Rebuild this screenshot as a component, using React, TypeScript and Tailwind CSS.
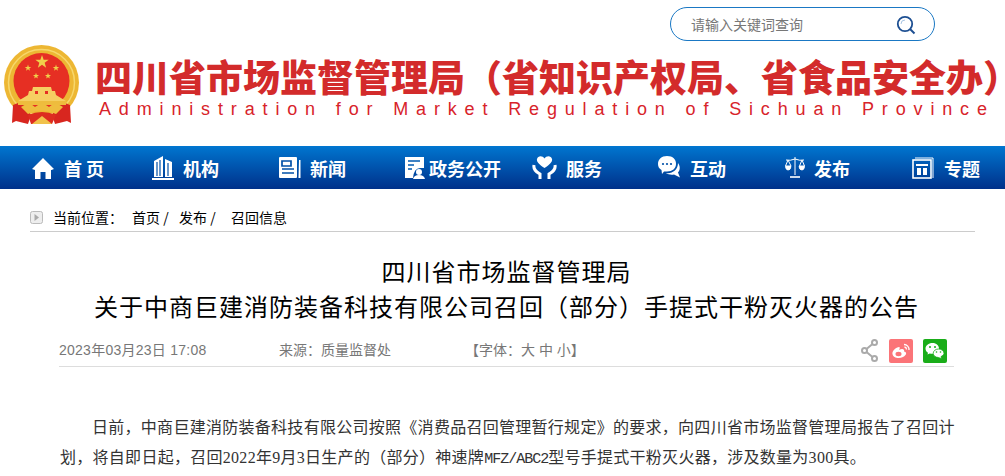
const sans = "font-['Liberation_Sans','Noto_Sans_CJK_SC',sans-serif]";

function Emblem() {
  const star = (cx: number, cy: number, r: number) => {
    const pts: string[] = [];
    for (let i = 0; i < 10; i++) {
      const a = -Math.PI / 2 + (i * Math.PI) / 5;
      const q = i % 2 === 0 ? r : r * 0.4;
      pts.push(`${cx + q * Math.cos(a)},${cy + q * Math.sin(a)}`);
    }
    return <polygon points={pts.join(" ")} fill="#f0cf4a" />;
  };
  return (
    <svg width="76" height="80" viewBox="0 0 76 80" className="shrink-0">
      <circle cx="37.5" cy="37.5" r="37.5" fill="#edb733" />
      <circle cx="37.5" cy="37.5" r="33" fill="none" stroke="#f7d76c" strokeWidth="1.5" />
      <path d="M9 60 L19 56 L27 70 L24 79 L12 76 L8 78 Z M66 60 L56 56 L48 70 L51 79 L63 76 L67 78 Z" fill="#d8261f" />
      <circle cx="37.5" cy="36" r="28" fill="#e62f23" />
      {star(38, 17, 7)}
      {star(24, 23, 3.4)}
      {star(52, 23, 3.4)}
      {star(32, 31, 3.2)}
      {star(44, 31, 3.2)}
      <path d="M29 42 H47 L48 46 H51 L52 50 L62 56 H14 L24 50 L25 46 H28 Z" fill="#f6cf62" />
      <rect x="31" y="46" width="3" height="3" fill="#e62f23" />
      <rect x="41" y="46" width="3" height="3" fill="#e62f23" />
      <rect x="14" y="56" width="48" height="4" fill="#eebc3d" />
      <path d="M17 62 Q25 56 31 62 Q38 56 45 62 Q51 56 59 62 L52 69 Q38 62 24 69 Z" fill="#efbd3e" />
      <path d="M24 70 Q38 64 52 70 L48 79 H27 Z" fill="#dd2c20" />
      <path d="M28 79 L38 71 L48 79 Z" fill="#f1c24b" />
    </svg>
  );
}

function Nav({ icon, label, w, gap = "gap-[9px]" }: { icon: React.ReactNode; label: string; w?: string; gap?: string }) {
  return (
    <div className={`flex items-center ${gap} ${w ?? ""}`}>
      <span className="flex items-center justify-center">{icon}</span>
      <span className="text-[18px] font-bold text-white leading-none whitespace-nowrap">{label}</span>
    </div>
  );
}

const IHome = <svg width="24" height="24" viewBox="0 0 24 24" fill="#fff"><path d="M12 2 L23 13 L20.5 14 L20 14 V23 H14.5 V16 H9.5 V23 H4 V14 L1 13 Z" /></svg>;
const IBuilding = <svg width="22" height="24" viewBox="0 0 22 24" fill="#fff"><path d="M2 5 L11 0 V21 H2 Z M13 3 L20 6 V21 H13 Z M0 22 H22 V24 H0 Z" /><path d="M5 6 V20 M8 4 V20 M16 7 V20" stroke="#0050a8" strokeWidth="1.2" /></svg>;
const INews = <svg width="22" height="22" viewBox="0 0 22 22"><rect x="0" y="0" width="18" height="21" rx="1" fill="#fff" /><path d="M20 3 H21.5 V21 H19.5 Z" fill="#fff" /><path d="M3 4 H12 V9 H3 Z M3 12 H15 M3 16 H15" fill="none" stroke="#0050a8" strokeWidth="1.7" /></svg>;
const IGov = <svg width="20" height="22" viewBox="0 0 20 22"><path d="M0 0 H19 V11 H15 Q9 11 8 21 H0 Z" fill="#fff" /><path d="M3 4 H15 M3 8 H9 M3 12 H7" stroke="#0059b0" strokeWidth="1.5" /><circle cx="14" cy="15" r="3" fill="#fff" /><path d="M8 22 Q9 18 14 18 Q19 18 20 22 Z" fill="#fff" /></svg>;
const IServe = <svg width="25" height="23" viewBox="0 0 25 23" fill="none"><path d="M12.5 12 C6 8 4.5 5 5 3 C6 -0.5 10.5 -0.5 12.5 2.5 C14.5 -0.5 19 -0.5 20 3 C20.5 5 19 8 12.5 12 Z" fill="#fff" /><path d="M2 9 C1 14 5 16 8 18 L8 23 M23 9 C24 14 20 16 17 18 L17 23" stroke="#fff" strokeWidth="3" /></svg>;
const IChat = <svg width="23" height="23" viewBox="0 0 23 23"><path d="M9 0 C15 0 18 3.5 18 8 C18 12.5 14.5 15.5 9 15.5 L6 15.5 L4 18 L3.5 14 C1 12.5 0 10.5 0 8 C0 3.5 3.5 0 9 0 Z" fill="#fff" /><circle cx="5" cy="8" r="1.1" fill="#0050a8" /><circle cx="9" cy="8" r="1.1" fill="#0050a8" /><circle cx="13" cy="8" r="1.1" fill="#0050a8" /><path d="M20 7 C23 11 21.5 15 20 16.5 L22 21.5 L16 18.5 C13 19 10 18.5 8 17 C14 18 20 14 20 7 Z" fill="#fff" /></svg>;
const IScale = <svg width="20" height="21" viewBox="0 0 20 21" fill="none" stroke="#fff" strokeWidth="1"><path d="M10 0 V18 M1 3 Q5 4 10 2 Q15 4 19 3" /><path d="M3 3 L0.5 9 H6 Z M17 3 L14.5 9 H19.5 Z" /><path d="M0.5 9.5 H6 Q5.5 13 3 13 Q1 13 .5 9.5 Z M14 9.5 H19.5 Q19 13 17 13 Q14.5 13 14 9.5 Z" fill="#fff" /><path d="M5 20 H15" strokeWidth="1.6" /></svg>;
const ITopic = <svg width="22" height="22" viewBox="0 0 22 22" fill="none" stroke="#fff"><path d="M3 1 H21 V21" strokeWidth="1" /><rect x="1" y="3" width="18" height="18" strokeWidth="1.6" /><path d="M4 7 H16 V9 H4 Z M5 11 H9 V18 H5 Z M11 11 H15 V18 H11 Z" fill="#fff" stroke="none" /></svg>;

export default function App() {
  return (
    <div className={`w-[1005px] h-[476px] overflow-hidden bg-white ${sans}`}>
      <header className="h-[146px] flex flex-col">
        <div className="pt-[7px] pl-[670px]">
          <div className="w-[265px] h-[34px] border border-[#1a78c4] rounded-[17px] flex items-center pl-[20px] pr-[18px] justify-between">
            <span className="text-[14px] text-[#777] pt-[2px]">请输入关键词查询</span>
            <svg width="20" height="20" viewBox="0 0 20 20" fill="none" className="mt-[2px]"><circle cx="9" cy="9" r="7.2" stroke="#1d4f92" strokeWidth="1.8" /><path d="M14 14 L18.5 18.5" stroke="#1d4f92" strokeWidth="2" /><path d="M5 9 A4 4 0 0 1 9 5" stroke="#a9c6e4" strokeWidth="1" /></svg>
          </div>
        </div>
        <div className="flex pl-[4px] pt-[4px]">
          <Emblem />
          <div className="ml-[15px] pt-[11px] w-[910px]">
            <div className="text-[37px] leading-[40px] font-black text-[#d32b2b] whitespace-nowrap font-['Noto_Sans_CJK_SC',sans-serif]">四川省市场监督管理局（省知识产权局、省食品安全办）</div>
            <div className="mt-[4px] ml-[4px] text-[18px] leading-[18px] tracking-[7.85px] text-[#d8232a] whitespace-nowrap">Administration for Market Regulation of Sichuan Province</div>
          </div>
        </div>
      </header>

      <nav className="h-[43px] bg-gradient-to-b from-[#0076d0] to-[#00308a] flex items-center pl-[31px] font-['Noto_Sans_CJK_SC',sans-serif]">
        <Nav icon={IHome} label="首 页" w="w-[121px]" />
        <Nav icon={IBuilding} label="机构" w="w-[127px]" />
        <Nav icon={INews} label="新闻" w="w-[126px]" />
        <Nav icon={IGov} label="政务公开" w="w-[127px]" gap="gap-[4px]" />
        <Nav icon={IServe} label="服务" w="w-[126px]" />
        <Nav icon={IChat} label="互动" w="w-[127px]" />
        <Nav icon={IScale} label="发布" w="w-[127px]" />
        <Nav icon={ITopic} label="专题" gap="gap-[10px]" />
      </nav>

      <div className="mx-[30px] w-[945px] mt-[17px] h-[26px] border-b border-[#ccc] flex items-center text-[14px] text-black pb-[3px] font-['Noto_Sans_CJK_SC',sans-serif]">
        <svg width="13" height="13" viewBox="0 0 13 13" fill="none"><rect x=".5" y=".5" width="12" height="12" rx="2" fill="#eee" stroke="#bbb" /><path d="M4.5 3 L9 6.5 L4.5 10 Z" fill="#aaa" /></svg>
        <span className="ml-[10px] w-[79px] shrink-0">当前位置：</span>
        <span className="w-[47px] shrink-0">首页 /</span>
        <span className="w-[52px] shrink-0">发布 /</span>
        <span>召回信息</span>
      </div>

      <h1 className="mt-[21px] pl-[8px] text-center text-[24px] leading-[35px] tracking-[1px] font-normal text-black font-['Noto_Sans_CJK_SC',sans-serif]">
        <div>四川省市场监督管理局</div>
        <div>关于中商巨建消防装备科技有限公司召回（部分）手提式干粉灭火器的公告</div>
      </h1>

      <div className="mx-[59px] w-[895px] mt-[11px] h-[33px] border-b border-[#ddd] flex items-center text-[14px] text-[#777] pt-[1px]">
        <span className="w-[220px] tracking-[0.25px]">2023年03月23日 17:08</span>
        <span className="w-[186px]">来源：质量监督处</span>
        <span>【字体：大 中 小】</span>
        <div className="ml-auto flex items-center mr-[7px]">
          <svg width="17" height="23" viewBox="0 0 17 23" fill="none" stroke="#aaa" strokeWidth="2"><circle cx="13.5" cy="3.5" r="2.5" /><circle cx="3.5" cy="11.5" r="2.5" /><circle cx="13.5" cy="19.5" r="2.5" /><path d="M5.5 10 L11.5 5 M5.5 13 L11.5 18" /></svg>
          <div className="w-[24px] h-[24px] ml-[11px] rounded-[2px] bg-[#fb7478] flex items-center justify-center">
            <svg width="20" height="18" viewBox="0 0 20 18" fill="none"><path d="M8 5 C3 6 1 10 1.5 12 C2 16 8 17 12 15 C16 13 16 10 13 9.5 C14 7 11 6 8 8 C9 6 9 5 8 5 Z" fill="#fff" /><ellipse cx="7.5" cy="12" rx="3" ry="2.2" fill="#fb7478" /><path d="M13 2.5 A5 5 0 0 1 18 8 M13.5 5 A2.5 2.5 0 0 1 15.5 7.5" stroke="#fff" strokeWidth="1.3" /></svg>
          </div>
          <div className="w-[24px] h-[24px] ml-[10px] rounded-[2px] bg-[#1aad19] flex items-center justify-center">
            <svg width="20" height="18" viewBox="0 0 20 18"><path d="M7.5 1 C3.5 1 .5 3.5 .5 6.5 C.5 8.5 1.5 9.8 3 10.8 L2.5 12.5 L4.7 11.4 C5.5 11.7 6.5 11.8 7.5 11.8 C11.5 11.8 14 9.5 14 6.5 C14 3.5 11.5 1 7.5 1 Z" fill="#fff" /><path d="M13.5 7 C10.5 7 8.2 9 8.2 11.3 C8.2 13.6 10.5 15.5 13.5 15.5 L16.5 16.8 L16 14.6 C17.8 13.6 19 12.6 19 11.3 C19 9 16.5 7 13.5 7 Z" fill="#fff" stroke="#1aad19" strokeWidth=".8" /><circle cx="5" cy="5" r="1" fill="#1aad19" /><circle cx="10" cy="5" r="1" fill="#1aad19" /><circle cx="11.5" cy="10" r=".8" fill="#1aad19" /><circle cx="15.5" cy="10" r=".8" fill="#1aad19" /></svg>
          </div>
        </div>
      </div>

      <div className="mx-[60px] w-[897px] mt-[46px] text-[16px] leading-[30px] tracking-[0.28px] text-[#333] font-['Liberation_Serif','Noto_Sans_CJK_SC',serif] [text-spacing-trim:space-all]">
        <p className="indent-[32px]">日前，中商巨建消防装备科技有限公司按照《消费品召回管理暂行规定》的要求，向四川省市场监督管理局报告了召回计划，将自即日起，召回2022年9月3日生产的（部分）神速牌<span className="font-['Liberation_Mono',monospace] text-[15px] tracking-[-1px]">MFZ/ABC2</span>型号手提式干粉灭火器，涉及数量为300具。</p>
      </div>
    </div>
  );
}
